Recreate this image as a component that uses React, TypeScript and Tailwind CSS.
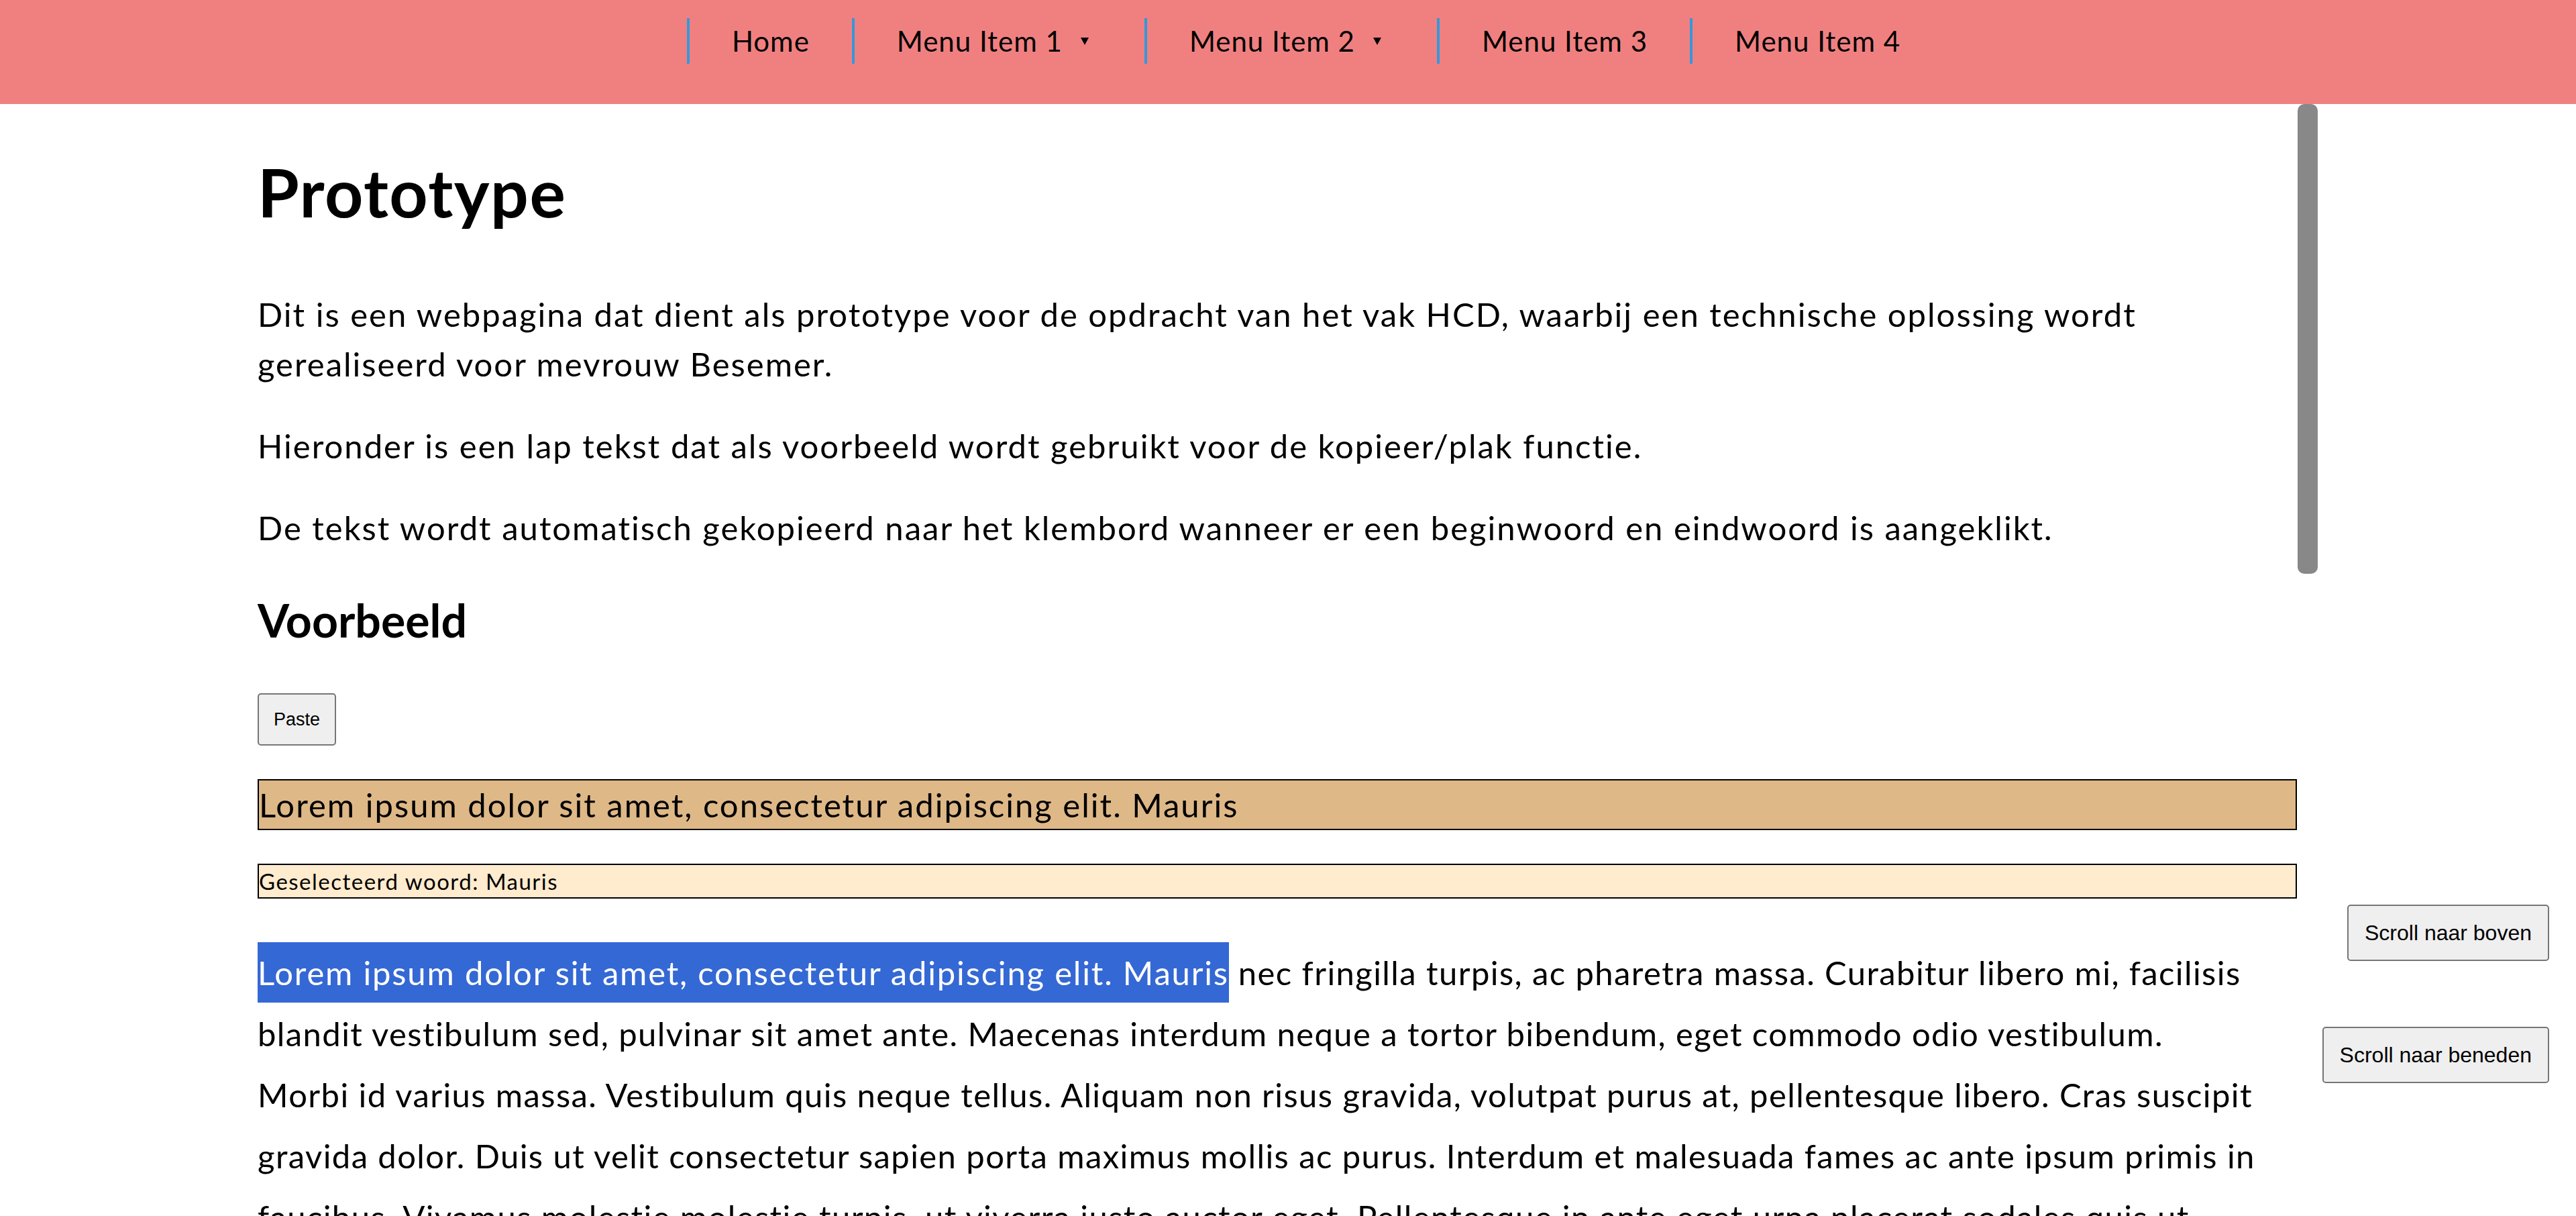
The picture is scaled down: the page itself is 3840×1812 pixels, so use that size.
const menu = [
  { label: 'Home', drop: false },
  { label: 'Menu Item 1', drop: true },
  { label: 'Menu Item 2', drop: true },
  { label: 'Menu Item 3', drop: false },
  { label: 'Menu Item 4', drop: false },
]

const selected = 'Lorem ipsum dolor sit amet, consectetur adipiscing elit. Mauris'

// lines as they wrap on the page
const loremLines = [
  ' nec fringilla turpis, ac pharetra massa. Curabitur libero mi, facilisis',
  'blandit vestibulum sed, pulvinar sit amet ante. Maecenas interdum neque a tortor bibendum, eget commodo odio vestibulum.',
  'Morbi id varius massa. Vestibulum quis neque tellus. Aliquam non risus gravida, volutpat purus at, pellentesque libero. Cras suscipit',
  'gravida dolor. Duis ut velit consectetur sapien porta maximus mollis ac purus. Interdum et malesuada fames ac ante ipsum primis in',
  'faucibus. Vivamus molestie molestie turpis, ut viverra justo auctor eget. Pellentesque in ante eget urna placerat sodales quis ut',
  'erat. Nulla facilisi. Sed vitae nisl sed lorem tincidunt vehicula. Proin dignissim, lacus at tincidunt fermentum, justo magna',
  'viverra orci, eu tempor ante urna sed nibh. Suspendisse potenti. Integer non ligula vel ligula faucibus pharetra.',
]

function Caret() {
  return (
    <svg width="12" height="11" viewBox="0 0 12 11" className="ml-[27px] mr-[20px] inline-block">
      <path d="M0 0 L12 0 L6 11 Z" fill="#000" />
    </svg>
  )
}

export default function App() {
  return (
    <div className="h-screen overflow-hidden bg-white text-black font-['Lato','Noto_Sans',sans-serif]">
      <nav className="h-[155px] bg-[#f08080] pt-[27px]">
        <ul className="flex justify-center pl-[80px]">
          {menu.map((m) => (
            <li
              key={m.label}
              className="border-l-4 border-[#3498db] px-[63px] text-[42px] tracking-[1px] leading-[68px] flex items-center"
            >
              <span>{m.label}</span>
              {m.drop && <Caret />}
            </li>
          ))}
        </ul>
      </nav>

      <main className="ml-[10%] w-[80%] h-[calc(100vh-155px)] flex overflow-hidden">
        <div className="flex-1 min-w-0">
          <h1 className="mt-[71px] text-[100px] tracking-[1.5px] leading-[118px] font-bold">Prototype</h1>

          <div className="text-[49px] tracking-[2px] leading-[73.5px]">
            <p className="mt-[88px]">
              Dit is een webpagina dat dient als prototype voor de opdracht van het vak HCD, waarbij een technische
              oplossing wordt gerealiseerd voor mevrouw Besemer.
            </p>
            <p className="mt-[48.5px]">
              Hieronder is een lap tekst dat als voorbeeld wordt gebruikt voor de kopieer/plak functie.
            </p>
            <p className="mt-[48.5px]">
              De tekst wordt automatisch gekopieerd naar het klembord wanneer er een beginwoord en eindwoord is
              aangeklikt.
            </p>
          </div>

          <h2 className="mt-[60px] text-[68px] leading-[82px] font-bold">Voorbeeld</h2>

          <button className="mt-[68px] block h-[78px] px-[22px] border-2 border-[#767676] rounded-[5px] bg-[#efefef] text-[27px] font-['Liberation_Sans',Arial,sans-serif]">
            Paste
          </button>

          <div className="mt-[50px] border-2 border-black bg-[#deb887] text-[49px] tracking-[2px] leading-[72px]">
            {selected}
          </div>

          <div className="mt-[50px] border-2 border-black bg-[#ffebcd] text-[33px] tracking-[1.5px] leading-[48px]">
            Geselecteerd woord: Mauris
          </div>

          <p className="mt-[65px] text-[49px] tracking-[1.4px] leading-[91px]">
            <span className="bg-[#3468d4] text-white py-[16px] tracking-[1.8px]">{selected}</span>
            {loremLines.map((line, i) => (
              <span key={i}>
                {i > 0 && <br />}
                {line}
              </span>
            ))}
          </p>
        </div>

        {/* scrollbar */}
        <div className="w-[32px] shrink-0 px-[1px]">
          <div className="h-[700px] rounded-[10px] bg-[#888]" />
        </div>
      </main>

      <div className="fixed right-[40px] top-[1348px] flex flex-col items-end gap-[98px] font-['Liberation_Sans',Arial,sans-serif] text-[32px]">
        <button className="h-[84px] px-[24px] border-2 border-[#767676] rounded-[5px] bg-[#efefef]">
          Scroll naar boven
        </button>
        <button className="h-[84px] px-[24px] border-2 border-[#767676] rounded-[5px] bg-[#efefef]">
          Scroll naar beneden
        </button>
      </div>
    </div>
  )
}
